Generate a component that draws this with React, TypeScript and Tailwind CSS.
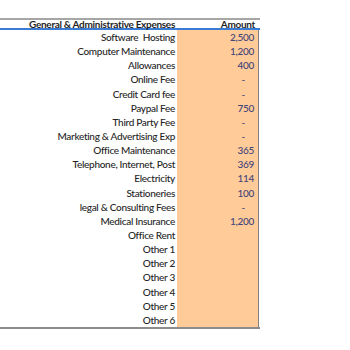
import React from "react";

const rows: [string, string][] = [
  ["Software  Hosting", "2,500"],
  ["Computer Maintenance", "1,200"],
  ["Allowances", "400"],
  ["Online Fee", "-"],
  ["Credit Card fee", "-"],
  ["Paypal Fee", "750"],
  ["Third Party Fee", "-"],
  ["Marketing & Advertising Exp", "-"],
  ["Office Maintenance", "365"],
  ["Telephone, Internet, Post", "369"],
  ["Electricity", "114"],
  ["Stationeries", "100"],
  ["legal & Consulting Fees", "-"],
  ["Medical Insurance", "1,200"],
  ["Office Rent", ""],
  ["Other 1", ""],
  ["Other 2", ""],
  ["Other 3", ""],
  ["Other 4", ""],
  ["Other 5", ""],
  ["Other 6", ""],
];

export default function App() {
  return (
    <div
      className="w-[350px] h-[350px] bg-white pt-[18px] tracking-[-0.3px]"
      style={{ fontFamily: "Lato, 'Open Sans', sans-serif" }}
    >
      <div className="w-[260px] border-t-2 border-[#a6a6a6]">
        <div className="flex h-[10px] border-b-2 border-[#3a7bd5] text-[10px] font-bold text-[#1f1f1f] leading-[8px]">
          <div className="w-[177px] pr-[2px] text-right whitespace-pre">General &amp; Administrative Expenses</div>
          <div className="w-[82px] pr-[4px] text-right">Amount</div>
        </div>
        <div className="border-b-2 border-[#8c8c8c]">
          {rows.map(([label, value], i) => (
            <div key={i} className="flex h-[14.15px] text-[10px] font-medium leading-none">
              <div className="w-[177px] pr-[2px] flex items-center justify-end text-[#262626] whitespace-pre">
                {label}
              </div>
              <div className="w-[82px] bg-[#ffcc99] border-r border-[#7f7f7f] flex items-center justify-end pr-[4px] text-[#44447a]">
                {value === "-" ? <span className="pr-[9px]">-</span> : value}
              </div>
            </div>
          ))}
        </div>
      </div>
    </div>
  );
}
